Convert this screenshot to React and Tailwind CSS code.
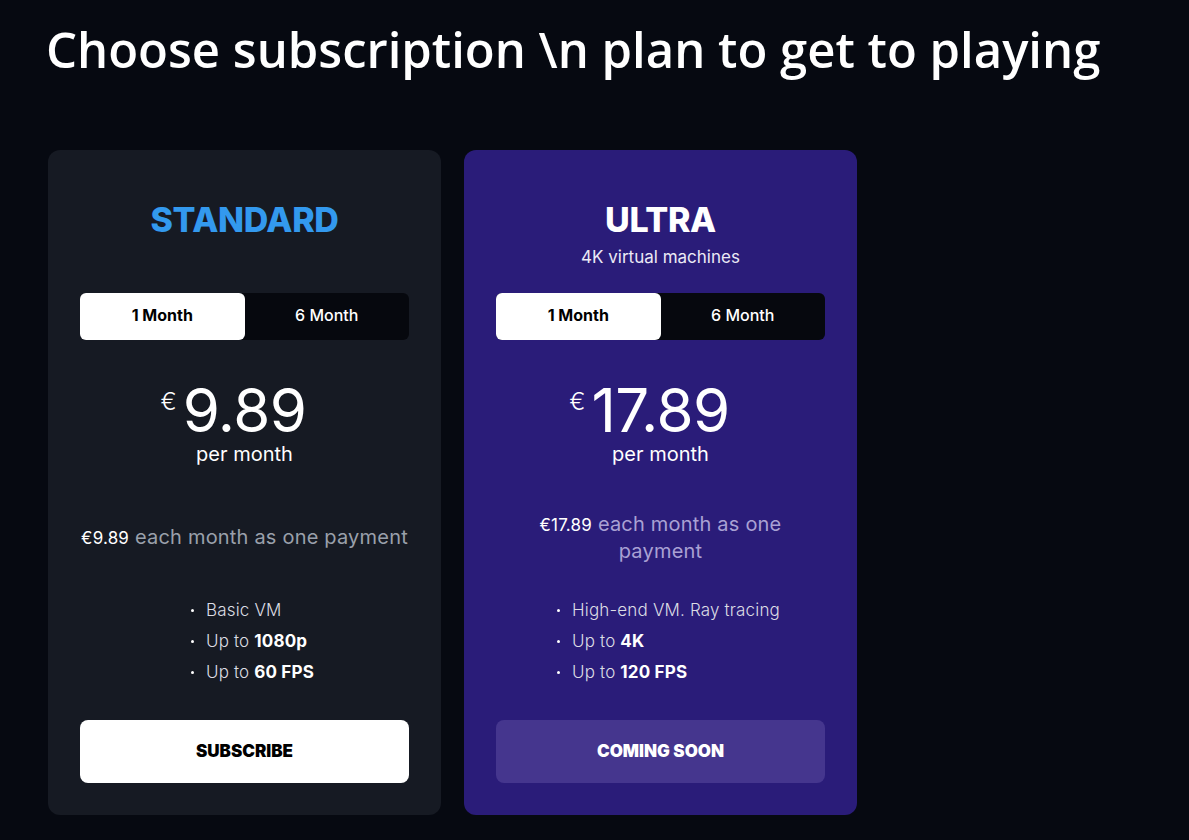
import React, { useState } from 'react'

const plans = [
    {
        name: 'STANDARD',
        subtitle: null,
        price: '9.89',
        features: [
            { text: 'Basic VM' },
            { text: 'Up to ', bold: '1080p' },
            { text: 'Up to ', bold: '60 FPS' },
        ],
        cta: 'SUBSCRIBE',
        ultra: false,
    },
    {
        name: 'ULTRA',
        subtitle: '4K virtual machines',
        price: '17.89',
        features: [
            { text: 'High-end VM. Ray tracing' },
            { text: 'Up to ', bold: '4K' },
            { text: 'Up to ', bold: '120 FPS' },
        ],
        cta: 'COMING SOON',
        ultra: true,
    },
]

function PlanCard({ plan }) {
    const [period, setPeriod] = useState(1)
    const u = plan.ultra

    return (
        <div className={`w-[393px] h-[665px] rounded-xl px-8 pt-[50px] pb-8 flex flex-col ${u ? 'bg-[#2a1c79]' : 'bg-[#161a23]'}`}>
            <h2 className={`text-center text-[34px] leading-[40px] font-extrabold tracking-[-0.01em] ${u ? 'text-white' : 'text-[#3399ee]'}`}>
                {plan.name}
            </h2>
            <p className={`text-center text-[17px] leading-6 mt-[5px] text-[#ebe9f5] ${plan.subtitle ? '' : 'invisible'}`}>
                {plan.subtitle || '-'}
            </p>

            <div className='mt-6 h-[47px] rounded-md bg-[#06080e] grid grid-cols-2'>
                <button
                    onClick={() => setPeriod(1)}
                    className={`rounded-md text-[16px] leading-none pb-[3px] ${period === 1 ? 'bg-white text-black font-bold' : 'text-white font-medium'}`}
                >1 Month</button>
                <button
                    onClick={() => setPeriod(6)}
                    className={`rounded-md text-[16px] leading-none pb-[3px] ${period === 6 ? 'bg-white text-black font-bold' : 'text-white font-medium'}`}
                >6 Month</button>
            </div>

            <div className='mt-[40px] flex justify-center text-white'>
                <div className='relative'>
                    <span className='absolute right-full mr-[6px] top-[10px] text-[24px] leading-none font-light'>€</span>
                    <span className='block text-[60px] leading-[60px] font-normal tracking-[-0.01em]'>{plan.price}</span>
                </div>
            </div>
            <p className='text-center text-white text-[20px] leading-7'>per month</p>

            <div className='mt-[12px] h-[115px] flex items-center justify-center'>
                <p className={`text-center text-[20px] leading-[26px] tracking-[0.01em] ${u ? 'text-[#a9a1d4]' : 'text-[#9aa0ab]'}`}>
                    <span className='text-white text-[17px]'>€{plan.price}</span> each month as one payment
                </p>
            </div>

            <ul className='mx-auto w-fit pl-4'>
                {plan.features.map((f, i) => (
                    <li key={i} className='flex items-center h-[31px] text-[17px] tracking-[0.01em] font-light text-[#dcdde4]'>
                        <span className='w-[3px] h-[3px] bg-white rounded-full mr-[12px]'></span>
                        <span>
                            {f.text}{f.bold && <b className='font-bold text-white'>{f.bold}</b>}
                        </span>
                    </li>
                ))}
            </ul>

            <button className={`mt-auto h-[63px] rounded-lg text-[17px] font-black ${u ? 'bg-[#45368e] text-white' : 'bg-white text-black'}`}>
                {plan.cta}
            </button>
        </div>
    )
}

function App() {
    return (
        <div className='min-h-screen bg-[#060911] font-["Inter",sans-serif] px-[46px] pt-[17px]'>
            <h1 className='text-white font-["Open_Sans",sans-serif] font-semibold text-[49px] leading-[64px]'>
                Choose subscription \n plan to get to playing
            </h1>
            <div className='mt-[69px] ml-[2px] flex gap-[23px]'>
                {plans.map((p) => <PlanCard key={p.name} plan={p} />)}
            </div>
        </div>
    )
}

export default App
